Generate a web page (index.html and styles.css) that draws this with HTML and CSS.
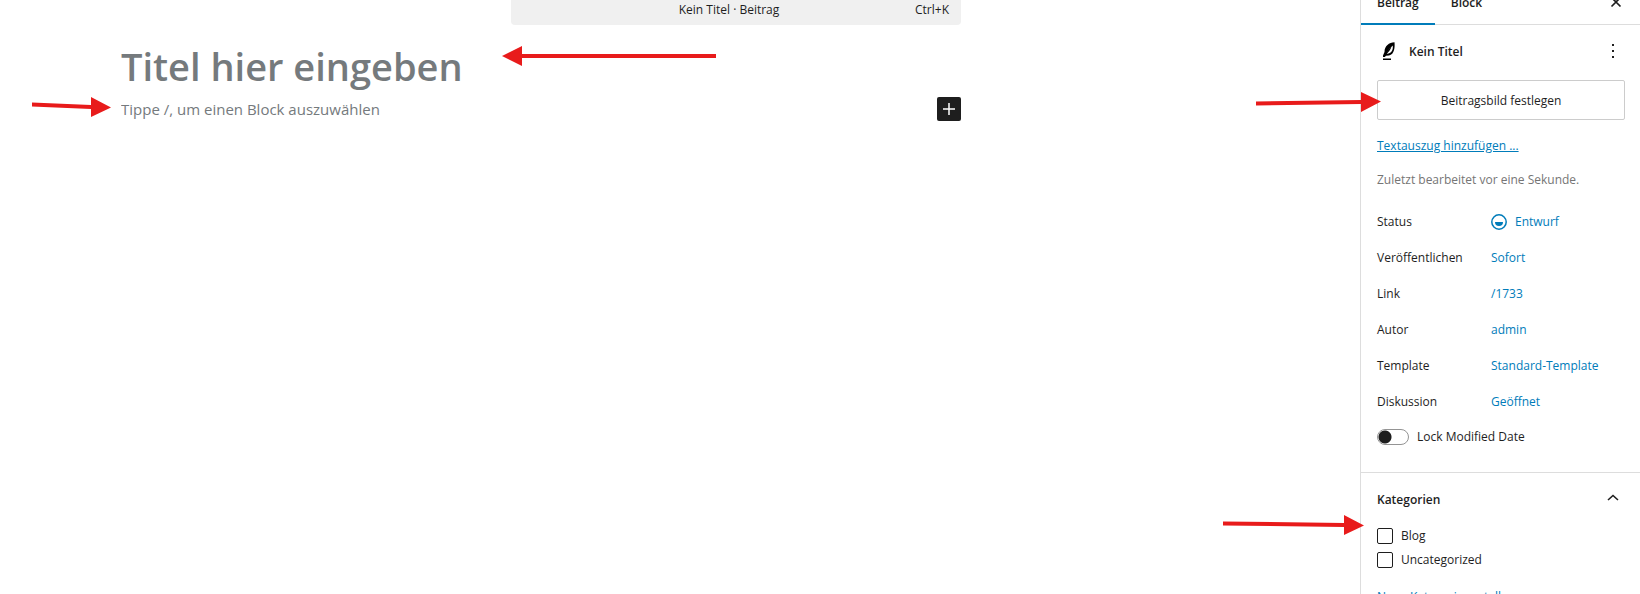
FILE: index.html
```html
<!DOCTYPE html>
<html lang="de">
<head>
    <meta charset="UTF-8">
    <meta name="viewport" content="width=device-width, initial-scale=1.0">
    <title>Kein Titel · Beitrag</title>
    <link rel="stylesheet" href="styles.css">
</head>
<body>

<div class="editor">
    <main class="content">
        <button type="button" class="command-bar">
            <span class="command-title">Kein Titel · Beitrag</span>
            <span class="command-key">Ctrl+K</span>
        </button>

        <input type="text" class="post-title" placeholder="Titel hier eingeben" aria-label="Titel">

        <div class="block-row">
            <input type="text" class="block-input" placeholder="Tippe /, um einen Block auszuwählen" aria-label="Block">
            <button type="button" class="add-block" aria-label="Block hinzufügen">
                <svg width="24" height="24" viewBox="0 0 24 24"><path d="M12 6v12M6 12h12" stroke="#fff" stroke-width="1.5"/></svg>
            </button>
        </div>

        <!-- Pfeile zu Titel und Block -->
        <svg class="arrow arrow-title" width="214" height="20" viewBox="0 0 214 20"><path d="M0 10L20 0v8h194v4H20v8z"/></svg>
        <svg class="arrow arrow-block" width="79" height="20" viewBox="0 0 79 20"><path d="M0 5.500l59 2.500V0l20 10.500L59 20v-8L0 9.500z"/></svg>
    </main>

    <aside class="sidebar">
        <div class="tabs">
            <button type="button" class="tab active">Beitrag</button>
            <button type="button" class="tab">Block</button>
            <button type="button" class="icon-button close" aria-label="Schließen">
                <svg width="24" height="24" viewBox="0 0 24 24"><path d="M7.500 7.500l9 9M16.500 7.500l-9 9" stroke="#1e1e1e" stroke-width="1.700"/></svg>
            </button>
        </div>

        <section class="summary">
            <div class="post-card">
                <svg width="24" height="24" viewBox="0 0 24 24">
                    <path d="M6 17V15.500L7.500 12C7.500 6 12 2.500 17.500 2.300C18 7 17.500 14.500 12 15.500L9 15.700L7.800 17z"/>
                    <path d="M9.800 13.800C10.800 10.500 12.800 8 15.800 5.500C16.200 10 14.500 13.500 9.800 13.800z" fill="#fff"/>
                    <path d="M8.800 14.500C10 11 12 8.500 14.500 6.500C13.500 9.500 12 12 8.800 14.500z"/>
                    <path d="M6 18.500h8V20H6z"/>
                </svg>
                <h2>Kein Titel</h2>
                <button type="button" class="icon-button" aria-label="Aktionen">
                    <svg width="24" height="24" viewBox="0 0 24 24"><path d="M11 4h2v2h-2zM11 10h2v2h-2zM11 16h2v2h-2z" fill="#1e1e1e"/></svg>
                </button>
            </div>
            <button type="button" class="featured-image">Beitragsbild festlegen</button>
            <a href="#" class="excerpt">Textauszug hinzufügen ...</a>
            <p class="last-edited">Zuletzt bearbeitet vor eine Sekunde.</p>

            <dl class="rows">
                <div class="row">
                    <dt>Status</dt>
                    <dd><button type="button" class="value">
                        <svg width="16" height="16" viewBox="0 0 16 16"><circle cx="8" cy="8" r="7.200" fill="none" stroke="#007cba" stroke-width="1.500"/><path d="M4 8h8a4 4 0 0 1-8 0z" fill="#007cba"/></svg>
                        Entwurf
                    </button></dd>
                </div>
                <div class="row"><dt>Veröffentlichen</dt><dd><button type="button" class="value">Sofort</button></dd></div>
                <div class="row"><dt>Link</dt><dd><button type="button" class="value">/1733</button></dd></div>
                <div class="row"><dt>Autor</dt><dd><button type="button" class="value">admin</button></dd></div>
                <div class="row"><dt>Template</dt><dd><button type="button" class="value">Standard-Template</button></dd></div>
                <div class="row"><dt>Diskussion</dt><dd><button type="button" class="value">Geöffnet</button></dd></div>
            </dl>

            <label class="toggle-row">
                <input type="checkbox" class="toggle" role="switch">
                Lock Modified Date
            </label>
        </section>

        <section class="categories">
            <div class="panel-head">
                <h2>Kategorien</h2>
                <button type="button" class="icon-button" aria-label="Kategorien einklappen">
                    <svg width="24" height="24" viewBox="0 0 24 24"><path d="M7 12l5-4.500 5 4.500" fill="none" stroke="#1e1e1e" stroke-width="1.600"/></svg>
                </button>
            </div>
            <label class="check"><input type="checkbox"> Blog</label>
            <label class="check"><input type="checkbox"> Uncategorized</label>
            <a href="#" class="new-category">Neue Kategorie erstellen</a>
        </section>

        <!-- Pfeile zu Beitragsbild und Kategorien -->
        <svg class="arrow arrow-image" width="125" height="20" viewBox="0 0 125 20"><path d="M0 9.500l105-1.500V0l20 9.500-20 10.500v-8L0 13.500z"/></svg>
        <svg class="arrow arrow-categories" width="141" height="20" viewBox="0 0 141 20"><path d="M0 6.500l121 1.500V0l20 10.500L121 20v-8L0 10.500z"/></svg>
    </aside>
</div>

</body>
</html>
```
FILE: styles.css
```css
* {
    box-sizing: border-box;
}
body {
    margin: 0;
    height: 100vh;
    overflow: hidden;
    background-color: #fff;
    color: #1e1e1e;
    font-family: "Segoe UI", "Open Sans", "Noto Sans", sans-serif;
    font-size: 12px;
    line-height: 18px;
}
button, input {
    font: inherit;
    color: inherit;
    margin: 0;
}
button {
    padding: 0;
    border: none;
    background: none;
    cursor: pointer;
}
svg {
    display: block;
    flex-shrink: 0;
}
h2, p, dl, dd {
    margin: 0;
    font-size: 12px;
}
h2 {
    font-weight: 600;
}
a {
    color: #007cba;
}
.editor {
    display: flex;
    min-height: 100vh;
}
/* Inhalt */
.content {
    position: relative;
    flex: 1;
    display: flex;
    flex-direction: column;
    padding-left: 121px;
    padding-right: 399px;
}
.command-bar {
    display: flex;
    align-items: center;
    align-self: flex-end;
    width: 450px;
    height: 32px;
    margin-top: -7px;
    padding: 2px 12px 0;
    border-radius: 4px;
    background-color: #f0f0f0;
}
.command-title {
    flex: 1;
    padding-left: 20px;
}
.post-title {
    width: 100%;
    height: 56px;
    margin-top: 13px;
    padding: 0;
    border: none;
    outline: none;
    font-size: 38px;
    font-weight: 600;
}
.block-row {
    display: flex;
    align-items: center;
    margin-top: 3px;
}
.block-input {
    flex: 1;
    height: 24px;
    padding: 0;
    border: none;
    outline: none;
    font-size: 15px;
}
.post-title::placeholder, .block-input::placeholder {
    color: #757a7d;
    opacity: 1;
}
.add-block {
    border-radius: 2px;
    background-color: #1e1e1e;
}
/* Seitenleiste */
.sidebar {
    position: relative;
    width: 280px;
    border-left: 1px solid #ddd;
}
.tabs {
    display: flex;
    height: 48px;
    margin-top: -23px;
    padding-right: 12px;
    border-bottom: 1px solid #ddd;
}
.tab {
    height: 48px;
    padding: 4px 16px 0;
    font-weight: 600;
}
.tab.active {
    box-shadow: inset 0 -2px #007cba;
}
.close {
    margin-left: auto;
    padding-top: 2px;
}
.summary {
    display: flex;
    flex-direction: column;
    align-items: stretch;
    gap: 16px;
    padding: 15px 15px 24px 16px;
    border-bottom: 1px solid #ddd;
}
.post-card {
    display: flex;
    align-items: center;
    gap: 8px;
}
.post-card h2 {
    flex: 1;
}
.featured-image {
    height: 40px;
    padding-top: 2px;
    border: 1px solid #ccc;
    border-radius: 2px;
}
.excerpt {
    align-self: flex-start;
    padding-top: 1px;
}
.last-edited {
    color: #757575;
}
.rows {
    display: flex;
    flex-direction: column;
    gap: 4px;
    padding-top: 1px;
}
.row {
    display: grid;
    grid-template-columns: 114px 1fr;
    align-items: center;
    height: 32px;
}
.value {
    display: flex;
    align-items: center;
    gap: 8px;
    color: #007cba;
}
.toggle-row {
    display: flex;
    align-items: center;
    gap: 8px;
    height: 22px;
    margin-top: -8px;
}
.toggle {
    appearance: none;
    width: 32px;
    height: 16px;
    border: 1px solid #949494;
    border-radius: 8px;
    background: radial-gradient(circle at 7px 7px, #1e1e1e 6px, transparent 7px);
}
.categories {
    display: flex;
    flex-direction: column;
    align-items: flex-start;
    gap: 8px;
    padding: 15px 15px 16px 16px;
}
.panel-head {
    display: flex;
    align-items: center;
    justify-content: space-between;
    width: 100%;
    margin-bottom: 8px;
}
.check {
    display: flex;
    align-items: center;
    gap: 8px;
    height: 16px;
}
.check input {
    appearance: none;
    width: 16px;
    height: 16px;
    border: 1px solid #1e1e1e;
    border-radius: 2px;
}
.new-category {
    margin-top: 12px;
    text-decoration: none;
}
/* Pfeile liegen über dem Inhalt */
.arrow {
    position: absolute;
    fill: #e81b1b;
}
.arrow-title {
    top: 46px;
    left: 502px;
}
.arrow-block {
    top: 97px;
    left: 32px;
}
.arrow-image {
    top: 92px;
    right: 259px;
}
.arrow-categories {
    top: 515px;
    right: 276px;
}
```
